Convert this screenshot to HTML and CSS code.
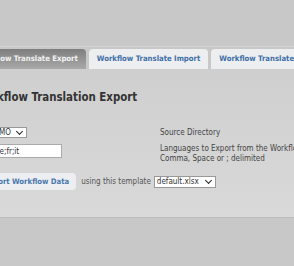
FILE: index.html
```html
<!DOCTYPE html>
<html lang="en">
<head>
    <meta charset="UTF-8">
    <title>Workflow Translation Export</title>
    <link rel="stylesheet" href="styles.css">
</head>
<body>
    <div class="top"></div>
    <div class="tabs">
        <a class="tab active" href="#">Workflow Translate Export</a>
        <a class="tab" href="#">Workflow Translate Import</a>
        <a class="tab" href="#">Workflow Translate Settings</a>
    </div>
    <div class="panel">
        <div class="content">
            <h2>Workflow Translation Export</h2>
            <div class="form">
                <div class="field">
                    <span class="selwrap">
                        <select class="sel src">
                            <option>DEMO</option>
                        </select>
                    </span>
                </div>
                <div class="hint first">Source Directory</div>
                <div class="field">
                    <input type="text" class="langs" value="de;fr;it">
                </div>
                <div class="hint">Languages to Export from the Workflow<br>Comma, Space or ; delimited</div>
            </div>
            <div class="actions">
                <button class="btn">Export Workflow Data</button>
                <span class="label">using this template</span>
                <span class="selwrap">
                    <select class="sel tpl">
                        <option>default.xlsx</option>
                    </select>
                </span>
            </div>
        </div>
    </div>
    <div class="bottom"></div>
</body>
</html>
```

FILE: styles.css
```css
* {
    margin: 0;
    padding: 0;
    box-sizing: border-box;
}
body {
    font-family: "DejaVu Sans Condensed", "DejaVu Sans", sans-serif;
    font-stretch: condensed;
    font-size: 8px;
    color: #444;
    background: #c8c8c8;
    overflow: hidden;
}
.top {
    height: 47px;
    border-bottom: 1px solid #d4d4d4;
}
.tabs {
    display: flex;
    gap: 3px;
    padding-top: 2px;
    margin-left: -33px;
    white-space: nowrap;
}
.tab {
    display: block;
    height: 20px;
    line-height: 20px;
    padding: 0 8px;
    font-size: 7.7px;
    font-weight: bold;
    color: #3f6fa6;
    text-decoration: none;
    background: #eceef0;
    border-radius: 4px 4px 0 0;
    flex-shrink: 0;
}
.tab.active {
    color: #f2f2f2;
    background: linear-gradient(#7e7e7e, #a9a9a9);
}
.panel {
    background: linear-gradient(#cfcfcf, #d9d9d9);
    height: 149px;
    border-bottom: 1px solid #bdbdbd;
}
.content {
    margin-left: -26px;
    padding-top: 21px;
}
h2 {
    font-size: 11.4px;
    font-weight: bold;
    color: #333;
    font-stretch: normal;
}
.form {
    display: grid;
    grid-template-columns: 172px auto;
    row-gap: 6px;
    margin-top: 23px;
    margin-left: 14px;
    align-items: start;
}
.hint {
    line-height: 10px;
    white-space: nowrap;
    color: #444;
}
.hint.first {
    padding-top: 1px;
}
.selwrap {
    position: relative;
    display: inline-block;
    line-height: 0;
}
.selwrap::after {
    content: "";
    position: absolute;
    right: 5px;
    top: 2px;
    width: 4px;
    height: 4px;
    border-right: 1.6px solid #222;
    border-bottom: 1.6px solid #222;
    transform: rotate(45deg);
    pointer-events: none;
}
.sel {
    appearance: none;
    font-family: inherit;
    font-stretch: condensed;
    font-size: 8px;
    line-height: 9px;
    height: 11px;
    border: 1px solid #999;
    border-radius: 0;
    background: #fff;
    color: #333;
    padding: 0 12px 0 2px;
}
.src {
    width: 41px;
    margin-left: -2px;
}
.langs {
    font-family: inherit;
    font-size: 8px;
    width: 71px;
    height: 14px;
    margin-left: 3px;
    border: 1px solid #aaa;
    background: #fff;
    color: #333;
    padding: 0 3px;
}
.actions {
    display: flex;
    align-items: center;
    gap: 5px;
    margin-top: 9px;
}
.btn {
    font-family: inherit;
    font-stretch: condensed;
    font-size: 7.7px;
    font-weight: bold;
    color: #4a78ad;
    background: #eceef1;
    border: none;
    border-radius: 4px;
    height: 17px;
    padding: 0 7px;
    margin-left: 3px;
}
.label {
    color: #555;
}
.tpl {
    width: 62px;
    height: 12px;
    margin-left: -2px;
}
.bottom {
    height: 60px;
}
```
